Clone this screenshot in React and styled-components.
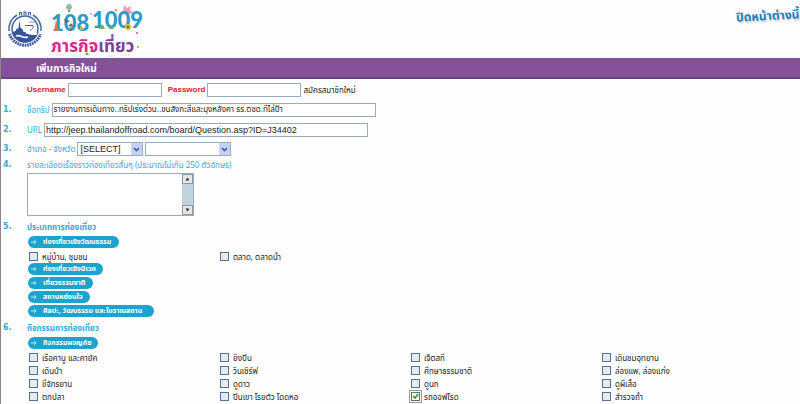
import React from 'react'
import styled, { createGlobalStyle, css } from 'styled-components'

const thai = '"Noto Sans", "Noto Sans Thai", "Liberation Sans", sans-serif'
const latin = '"Liberation Sans", sans-serif'

const GlobalStyle = createGlobalStyle`
    * { box-sizing: border-box; }
    body {
        margin: 0;
        background: #fdfdfd;
        color: #222;
        font: 8px/12px ${thai};
    }
    input, select, textarea, button {
        font-family: "Liberation Sans", ${thai};
        margin: 0;
    }
`

const Page = styled.div`
    height: 100vh;
    overflow: hidden;
    border-left: 1px solid #8d8589;
`

const Header = styled.header`
    height: 58px;
    display: flex;
    align-items: flex-start;
    padding: 3px 0 0 4px;
    gap: 4px;
`

const CloseButton = styled.button`
    margin-left: auto;
    padding: 5px 1px 3px 0;
    border: 0;
    background: none;
    color: #1f7fc0;
    font: bold 12px/16px ${thai};
    text-shadow: 1px 2px 1px #d5d5d5;
    white-space: nowrap;
    transform: rotate(-3deg);
`

const TitleBar = styled.h1`
    height: 21px;
    margin: 0;
    padding-left: 35px;
    background: #84519b;
    border-bottom: 2px solid #6c4585;
    color: #fff;
    font: bold 10px/21px ${thai};
`

const Form = styled.form`
    display: flex;
    flex-direction: column;
    padding: 4px 0 0 2px;
`

const Section = styled.section`
    display: grid;
    grid-template-columns: 24px 1fr;
    margin-bottom: ${props => props.$gap || 0}px;
`

const Num = styled.span`
    color: #35a8e0;
    font: bold 8px/14px "DejaVu Sans", sans-serif;
`

const Line = styled.div`
    display: flex;
    align-items: center;
    height: 14px;
    gap: 2px;
`

const Label = styled.label`
    color: #35a8e0;
    font: 8px/14px ${thai};
    white-space: nowrap;
`

const LoginLabel = styled.label`
    color: #e01b22;
    font: bold 8px/14px ${latin};
    margin-left: ${props => props.$indent || 0}px;
`

const Heading = styled.h2`
    margin: 0 0 2px;
    color: #35a8e0;
    font: bold 8px/14px ${thai};
`

const field = css`
    border: 1px solid #9aaabf;
    border-radius: 0;
    background: #fff;
    color: #222;
    outline: 0;
`

const Input = styled.input`
    ${field}
    width: ${props => props.$width}px;
    height: 14px;
    padding: 0 1px;
    font-size: ${props => props.$size || 9}px;
`

const RegisterLink = styled.a`
    color: #222;
    text-decoration: none;
`

const SelectWrap = styled.div`
    position: relative;
    width: ${props => props.$width}px;
    height: 14px;
`

const Select = styled.select`
    ${field}
    appearance: none;
    display: block;
    width: 100%;
    height: 14px;
    padding: 0 2px;
    font-size: 9px;
`

const Arrow = styled.svg`
    position: absolute;
    top: 1px;
    right: 1px;
    pointer-events: none;
`

const TextBox = styled.div`
    ${field}
    display: flex;
    width: 167px;
    height: 43px;
    margin-top: 1px;
`

const TextArea = styled.textarea`
    flex: 1;
    min-width: 0;
    border: 0;
    padding: 1px;
    resize: none;
    outline: 0;
    overflow: hidden;
    font-size: 9px;
`

const Pill = styled.button`
    display: flex;
    align-items: center;
    gap: 6px;
    width: ${props => props.$width}px;
    height: 12px;
    margin: 0 0 2px 1px;
    padding: 0 0 0 3px;
    border: 0;
    border-radius: 6px;
    background: #1ca4cf;
    color: #fff;
    && { font: bold 7px/12px ${thai}; }
    white-space: nowrap;

    svg { flex: none; }
`

const Checks = styled.div`
    display: grid;
    grid-template-columns: repeat(4, 191px);
    grid-auto-rows: 13px;
    margin-left: 2px;
`

const CheckLabel = styled.label`
    display: flex;
    align-items: center;
    gap: 4px;
    white-space: nowrap;
`

const Check = styled.input`
    appearance: none;
    width: 9px;
    height: 9px;
    border: 1px solid #54728f;
    background: #e3eaf1;
    &:checked {
        outline: 1px solid #999;
        outline-offset: 1px;
        background: #fff url("data:image/svg+xml,%3Csvg xmlns='http://www.w3.org/2000/svg' viewBox='0 0 7 7'%3E%3Cpath d='M1 3l2 2 3-4' fill='none' stroke='%2321a121' stroke-width='1.6'/%3E%3C/svg%3E");
    }
`

const Emblem = () => (
    <svg width="40" height="50" viewBox="0 0 40 50" aria-hidden="true">
        <circle cx="20" cy="26" r="13" fill="#fff" stroke="#4465a8" strokeWidth="1.5" />
        <path d="M4.5 31a16.3 16.3 0 0 0 31 0" fill="none" stroke="#3f5ea2" strokeWidth="3" strokeDasharray="1.8 .7" />
        <path d="M4 28a16 16 0 0 1 8-16M36 28a16 16 0 0 0-8-16" fill="none" stroke="#4465a8" strokeWidth="1.6" />
        <path d="M14.5 12.500v-3h2v3M19 12v-3h2v3M23.500 12.500v-3h2v3" fill="none" stroke="#4465a8" strokeWidth="1.1" />
        <path d="M7.500 29l3-1 1-2 2-1 1-8 1 8 2 1 1 3h2l1 2h11c-1 4-5 7-9 8-7 2-14-2-16-10z" fill="#35569c" />
        <path d="M20 23h7c1 4-4 4-4 7 2 2 6 1 9 1M11 33c4-2 7 3 12 1" fill="none" stroke="#fff" strokeWidth="1.7" />
        <path d="M20 22.500h8c1 2-1 4-3 5" fill="none" stroke="#4465a8" strokeWidth="1" />
        <path d="M24 19h6" stroke="#7d93c2" />
    </svg>
)

const CampaignLogo = () => (
    <svg width="100" height="55" viewBox="0 0 100 55">
        <path d="M75 2l3 3 4-2-1 4 4 3-5 1-1 4-3-4-5 1 3-4z" fill="#ee9cbd" />
        <path d="M20 1q3 0 3 4l-2 2h-2l-2-2q0-4 3-4z" fill="#86c5a3" />
        <path d="M19 8h2" stroke="#c77d49" strokeWidth="2" />
        <text x="2" y="28" fontFamily="Lato, sans-serif" fontSize="22" fontWeight="900" fill="#2d9bc9">108</text>
        <text x="43" y="25" fontFamily="Lato, sans-serif" fontSize="22" fontWeight="900" fill="#2d9bc9">1009</text>
        <path d="M5 28l2-11 3 11zM7 22h2" fill="#d77b4c" />
        <path d="M22 28v-4m-2-1q2-4 4 0z" stroke="#8c5534" fill="#4c9b50" />
        <path d="M30 27l2-5 3 5z" fill="#e4a72e" />
        <path d="M15 16l6 2-4 2z" fill="#596273" />
        <circle cx="79" cy="24" r="3" fill="#efba27" />
        <circle cx="79" cy="24" r="1.2" fill="#765329" />
        <circle cx="42" cy="11" r="1" fill="#eb86ae" />
        <circle cx="67" cy="7" r="1.300" fill="#e7a62b" />
        <path d="M50 26l3-5 3 5zM60 26l2-3 3 3z" fill="#6eae58" />
        <text x="2" y="49" fontFamily={thai} fontSize="17" fontWeight="bold" fill="#d9298a">ภารกิจ<tspan fill="#7a4296">เที่ยว</tspan></text>
        <path d="M7 52h8M24 53h9M58 53h8M73 52h9" stroke="#ddd3e1" strokeDasharray="2 1" />
        <path d="M36 52l2-3 2 3z" fill="#66a95c" />
        <circle cx="88" cy="30" r="1" fill="#df4696" />
        <circle cx="89" cy="44" r="1.200" fill="#e3ad45" />
    </svg>
)

const DropArrow = () => (
    <Arrow width="11" height="12" viewBox="0 0 11 12" aria-hidden="true">
        <rect width="11" height="12" rx="1" fill="#c3d3f8" />
        <path d="M3 5l2.5 2.5L8 5" fill="none" stroke="#3f5c8c" strokeWidth="1.6" />
    </Arrow>
)

const ScrollBar = () => (
    <svg width="11" height="41" viewBox="0 0 11 41" aria-hidden="true">
        <rect width="11" height="41" fill="#bfd3de" />
        <rect x=".5" y=".5" width="10" height="9" fill="#e5e5e5" stroke="#8d9aa3" />
        <rect x=".5" y="31.5" width="10" height="9" fill="#e5e5e5" stroke="#8d9aa3" />
        <path d="M3.5 6.5h4l-2-3zM3.5 34.5h4l-2 3z" fill="#333" />
    </svg>
)

const Category = ({ width, children }) => (
    <Pill type="button" $width={width}>
        <svg width="6" height="6" viewBox="0 0 6 6" aria-hidden="true">
            <path d="M0 3h5M3 1l2 2-2 2" fill="none" stroke="#b8ecfa" />
        </svg>
        {children}
    </Pill>
)

const CheckList = ({ items }) => (
    <Checks>
        {items.map(item => (
            <CheckLabel key={item}>
                <Check type="checkbox" defaultChecked={item === 'รถออฟโรด'} />
                {item}
            </CheckLabel>
        ))}
    </Checks>
)

const activities = [
    'เรือคานู และคายัค', 'ยิงปืน', 'เจ็ตสกี', 'เดินชมอุทยาน',
    'เดินป่า', 'วินเซิร์ฟ', 'ศึกษาธรรมชาติ', 'ล่องแพ, ล่องแก่ง',
    'ขี่จักรยาน', 'ดูดาว', 'ดูนก', 'ดูผีเสื้อ',
    'ตกปลา', 'ปีนเขา โรยตัว โดดหอ', 'รถออฟโรด', 'สำรวจถ้ำ',
]

export default function App() {
    return (
        <Page>
            <GlobalStyle />
            <Header>
                <Emblem />
                <CampaignLogo />
                <CloseButton type="button">ปิดหน้าต่างนี้</CloseButton>
            </Header>
            <TitleBar>เพิ่มภารกิจใหม่</TitleBar>
            <Form>
                <Section $gap={6}>
                    <span />
                    <Line>
                        <LoginLabel htmlFor="user">Username</LoginLabel>
                        <Input id="user" $width={94} />
                        <LoginLabel $indent={4} htmlFor="pass">Password</LoginLabel>
                        <Input id="pass" type="password" $width={94} />
                        <RegisterLink href="#register">สมัครสมาชิกใหม่</RegisterLink>
                    </Line>
                </Section>
                <Section $gap={6}>
                    <Num>1.</Num>
                    <Line>
                        <Label htmlFor="trip">ชื่อทริป</Label>
                        <Input id="trip" $width={324} $size={8} defaultValue="รายงานการเดินทาง..ทริปเร่งด่วน..ขนสังกะสีและมุงหลังคา รร.ตชด.ทีไล่ป้า" />
                    </Line>
                </Section>
                <Section $gap={5}>
                    <Num>2.</Num>
                    <Line>
                        <Label htmlFor="url">URL</Label>
                        <Input id="url" $width={324} defaultValue="http://jeep.thailandoffroad.com/board/Question.asp?ID=J34402" />
                    </Line>
                </Section>
                <Section $gap={2}>
                    <Num>3.</Num>
                    <Line>
                        <Label htmlFor="province">อำเภอ - จังหวัด</Label>
                        <SelectWrap $width={66}>
                            <Select id="province"><option>[SELECT]</option></Select>
                            <DropArrow />
                        </SelectWrap>
                        <SelectWrap $width={86}>
                            <Select aria-label="จังหวัด"><option></option></Select>
                            <DropArrow />
                        </SelectWrap>
                    </Line>
                </Section>
                <Section $gap={4}>
                    <Num>4.</Num>
                    <div>
                        <Line><Label htmlFor="story">รายละเอียดเรื่องราวท่องเที่ยวสั้นๆ (ประมาณไม่เกิน 250 ตัวอักษร)</Label></Line>
                        <TextBox>
                            <TextArea id="story" />
                            <ScrollBar />
                        </TextBox>
                    </div>
                </Section>
                <Section $gap={2}>
                    <Num>5.</Num>
                    <div>
                        <Heading>ประเภทการท่องเที่ยว</Heading>
                        <Category width={91}>ท่องเที่ยวเชิงวัฒนธรรม</Category>
                        <CheckList items={['หมู่บ้าน, ชุมชน', 'ตลาด, ตลาดน้ำ']} />
                        <Category width={75}>ท่องเที่ยวเชิงนิเวศ</Category>
                        <Category width={65}>เที่ยวธรรมชาติ</Category>
                        <Category width={62}>สถานหย่อนใจ</Category>
                        <Category width={126}>ศิลปะ, วัฒนธรรม และโบราณสถาน</Category>
                    </div>
                </Section>
                <Section>
                    <Num>6.</Num>
                    <div>
                        <Heading>กิจกรรมการท่องเที่ยว</Heading>
                        <Category width={70}>กิจกรรมผจญภัย</Category>
                        <CheckList items={activities} />
                    </div>
                </Section>
            </Form>
        </Page>
    )
}
